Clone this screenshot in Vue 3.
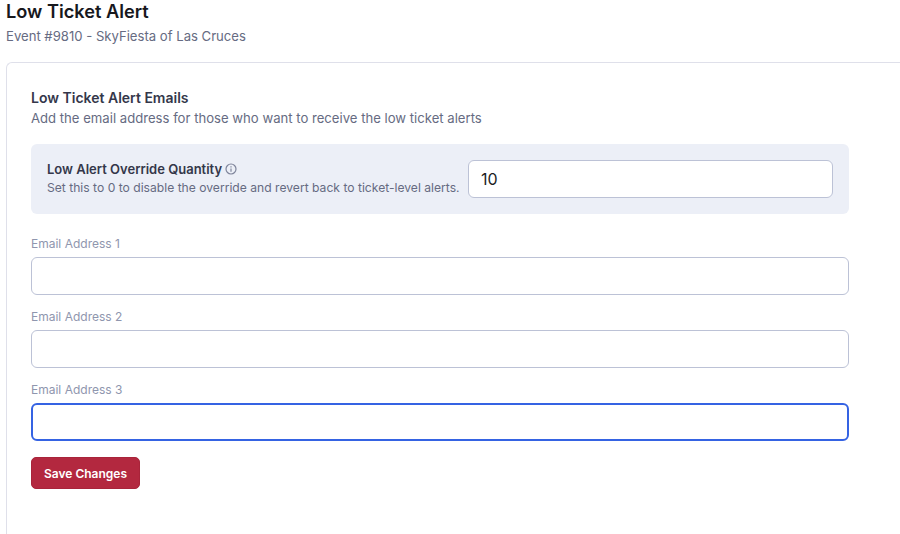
<script setup>
const emails = [
  { label: 'Email Address 1', focused: false },
  { label: 'Email Address 2', focused: false },
  { label: 'Email Address 3', focused: true },
]
</script>

<template>
  <div class="page">
    <header class="head">
      <h1>Low Ticket Alert</h1>
      <p>Event #9810 - SkyFiesta of Las Cruces</p>
    </header>
    <section class="card">
      <div class="body">
        <h2>Low Ticket Alert Emails</h2>
        <p class="lead">Add the email address for those who want to receive the low ticket alerts</p>
        <div class="override">
          <div class="override-text">
            <div class="override-title">
              <span>Low Alert Override Quantity</span>
              <svg width="12" height="12" viewBox="0 0 12 12" fill="none" stroke="#7f859b" stroke-width="1.2">
                <circle cx="6" cy="6" r="5" />
                <path d="M6 5.4V8.8" />
                <path d="M6 3.2V4.4" />
              </svg>
            </div>
            <div class="override-sub">Set this to 0 to disable the override and revert back to ticket-level alerts.</div>
          </div>
          <div class="qty">10</div>
        </div>
        <div v-for="e in emails" :key="e.label" class="field">
          <label>{{ e.label }}</label>
          <div class="input" :class="{ focused: e.focused }"></div>
        </div>
        <button class="save" type="button">Save Changes</button>
      </div>
    </section>
  </div>
</template>

<style scoped>
.page {
  width: 900px;
  height: 534px;
  overflow: hidden;
  box-sizing: border-box;
  padding: 0 0 0 6px;
  font-family: Inter, "Liberation Sans", sans-serif;
  background: #fff;
}
.head h1 {
  margin: 0;
  font-size: 18.2px;
  line-height: 22px;
  font-weight: 600;
  color: #17181d;
}
.head p {
  margin: 0;
  padding-top: 4px;
  font-size: 13.12px;
  line-height: 20px;
  color: #666b82;
}
.card {
  margin-top: 16px;
  border: 1px solid #dfe0ea;
  border-right: 0;
  border-bottom: 0;
  border-radius: 6px 0 0 0;
  height: 480px;
}
.body {
  width: 818px;
  padding: 25px 0 0 24px;
}
h2 {
  margin: 0 0 1px;
  font-size: 14px;
  line-height: 19px;
  font-weight: 600;
  color: #34374a;
}
.lead {
  margin: 0;
  font-size: 13.13px;
  line-height: 20px;
  color: #666b82;
}
.override {
  margin-top: 16px;
  height: 70px;
  box-sizing: border-box;
  padding: 0 16px;
  display: flex;
  align-items: center;
  justify-content: space-between;
  background: #eceff7;
  border-radius: 6px;
}
.override-title {
  display: flex;
  align-items: center;
  gap: 3px;
  font-size: 13px;
  line-height: 16px;
  font-weight: 600;
  color: #34374a;
}
.override-sub {
  margin-top: 2px;
  font-size: 12.13px;
  line-height: 18px;
  color: #666b82;
  white-space: nowrap;
}
.qty {
  flex: none;
  width: 365px;
  height: 38px;
  box-sizing: border-box;
  border: 1px solid #bcc2d6;
  border-radius: 6px;
  background: #fff;
  padding: 0 12px;
  font-size: 16px;
  line-height: 36px;
  color: #1c1d22;
}
.field {
  margin-top: 21px;
}
.field + .field {
  margin-top: 13px;
}
label {
  display: block;
  font-size: 12px;
  line-height: 18px;
  color: #8f96ae;
}
.input {
  margin-top: 4px;
  height: 38px;
  box-sizing: border-box;
  border: 1px solid #bcc2d6;
  border-radius: 6px;
  background: #fff;
}
.input.focused {
  border: 2px solid #3563e3;
}
.save {
  margin-top: 16px;
  display: block;
  width: 109px;
  height: 32px;
  border: 1px solid #a9243a;
  border-radius: 5px;
  background: #b3283f;
  color: #fff;
  font-family: inherit;
  font-size: 12px;
  font-weight: 600;
  padding: 0;
}
</style>
